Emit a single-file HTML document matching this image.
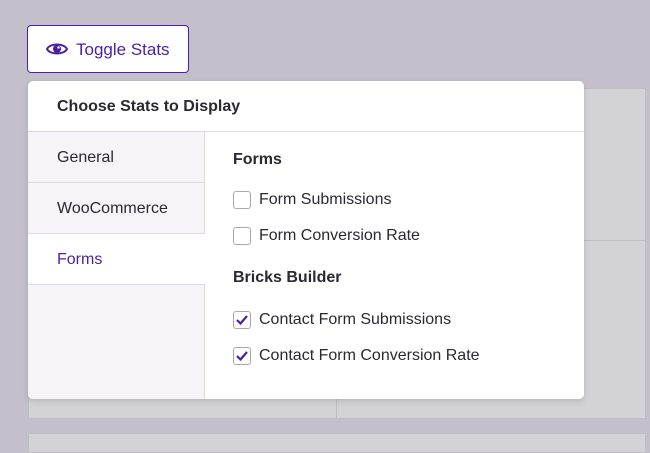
<!DOCTYPE html><html><head><style>
*{box-sizing:border-box;margin:0;padding:0}
body{width:650px;height:439px;background:#c4bfcb;font-family:"Liberation Sans",sans-serif;position:relative;overflow:hidden;color:#2a2833}
.bg{position:absolute;background:#d3d2d6;border:1px solid #bfbcc4}
.btn{position:absolute;left:27px;top:25px;width:162px;height:48px;background:#fff;border:1px solid #4b1fa3;border-radius:4px;color:#4b1fa3;font-size:17px;display:flex;align-items:center;padding-left:18px;padding-top:2px}
.pop{position:absolute;left:28px;top:81px;width:556px;height:318px;background:#fff;border-radius:5px;box-shadow:0 2px 6px rgba(0,0,0,.15);overflow:hidden}
.hd{height:51px;border-bottom:1px solid #dcdae0;font-weight:bold;font-size:16px;padding:17px 0 0 29px}
.side{position:absolute;left:0;top:51px;width:177px;bottom:0;background:#f6f4f9;border-right:1px solid #dcdae0}
.tab{height:51px;border-bottom:1px solid #dcdae0;font-size:16px;padding:17px 0 0 29px}
.tab.a{background:#fff;color:#4b1fa3;margin-right:-1px}
.ct{position:absolute;left:205px;top:53px}
h4{font-size:16px;font-weight:bold;position:absolute;white-space:nowrap}
.cb{position:absolute;white-space:nowrap;font-size:16px;display:flex;align-items:center}
.box{width:18px;height:18px;border:1px solid #a9a6ae;border-radius:3px;margin-right:8px;display:flex;align-items:center;justify-content:center}
</style></head><body>
<div class="bg" style="left:28px;top:88px;width:618px;height:331px"></div>
<div style="position:absolute;left:336px;top:88px;width:1px;height:331px;background:#bfbcc4"></div>
<div style="position:absolute;left:28px;top:240px;width:618px;height:1px;background:#bfbcc4"></div>
<div class="bg" style="left:28px;top:433px;width:618px;height:20px"></div>
<div class="btn"><svg width="22" height="16" viewBox="0 0 22 16" style="margin-right:8px;margin-top:-2px"><path d="M1 8C4 2 18 2 21 8C18 14 4 14 1 8Z" fill="none" stroke="#4b1fa3" stroke-width="2"/><circle cx="11" cy="8" r="4" fill="#4b1fa3"/><circle cx="12.5" cy="6.5" r="1.2" fill="#fff"/></svg>Toggle Stats</div>
<div class="pop">
<div class="hd">Choose Stats to Display</div>
<div class="side"><div class="tab">General</div><div class="tab">WooCommerce</div><div class="tab a">Forms</div></div>
<div class="ct">
<h4 style="top:17px">Forms</h4>
<div class="cb" style="top:57px"><div class="box"></div>Form Submissions</div>
<div class="cb" style="top:93px"><div class="box"></div>Form Conversion Rate</div>
<h4 style="top:135px">Bricks Builder</h4>
<div class="cb" style="top:177px"><div class="box"><svg width="12" height="10" viewBox="0 0 12 10"><path d="M1 5L4.5 8.5L11 1" fill="none" stroke="#4b1fa3" stroke-width="2.2"/></svg></div>Contact Form Submissions</div>
<div class="cb" style="top:213px"><div class="box"><svg width="12" height="10" viewBox="0 0 12 10"><path d="M1 5L4.5 8.5L11 1" fill="none" stroke="#4b1fa3" stroke-width="2.2"/></svg></div>Contact Form Conversion Rate</div>
</div></div>
</body></html>
